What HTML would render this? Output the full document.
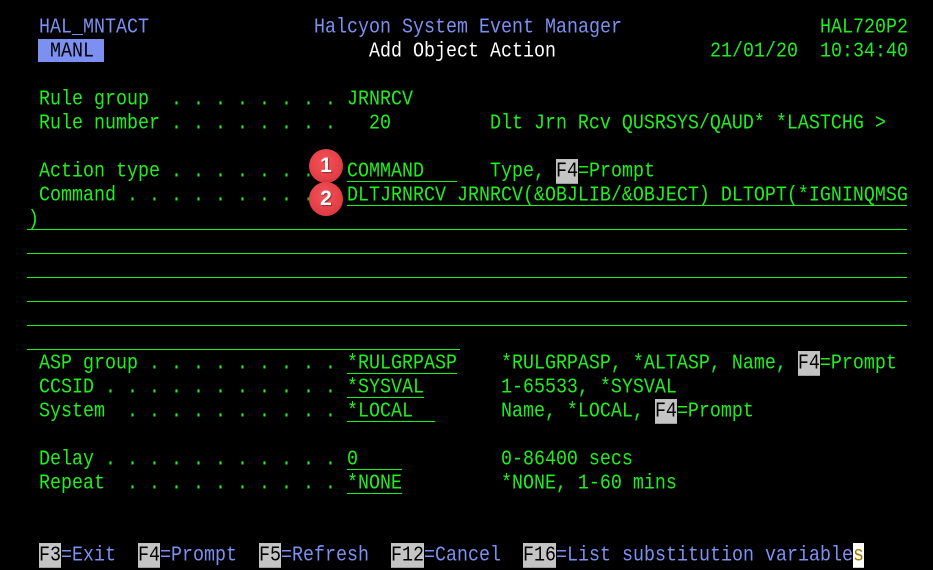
<!DOCTYPE html>
<html><head><meta charset="utf-8"><style>
html,body{margin:0;padding:0;background:#000;}
body{width:933px;height:569px;position:relative;overflow:hidden;font-family:"Liberation Mono",monospace;font-size:18.33px;}
.r{position:absolute;white-space:pre;line-height:24px;height:24px;color:#1ef01e;transform:scaleY(1.18);transform-origin:0 50%;}
.b{color:#7b90f0;}
.w{color:#fff;}
.k{background:#c4c4c4;color:#000;}
.u{position:absolute;height:1px;background:#1ef01e;}
.badge{position:absolute;width:34px;height:34px;border-radius:50%;background:radial-gradient(circle at 45% 40%,#f2555a,#d93036);color:#fff;font-family:"Liberation Sans",sans-serif;font-weight:bold;font-size:21px;line-height:34px;text-align:center;box-shadow:0 2px 4px rgba(0,0,0,.6);text-shadow:1px 1px 1px rgba(0,0,0,.4);}
</style></head><body>
<div class="r b" style="left:39px;top:16px">HAL_MNTACT</div>
<div class="r b" style="left:314px;top:16px">Halcyon System Event Manager</div>
<div class="r" style="left:820px;top:16px">HAL720P2</div>
<div style="position:absolute;left:38px;top:39px;width:66px;height:23px;background:#7b90f0"></div>
<div class="r" style="left:39px;top:40px;color:#000"> MANL</div>
<div class="r w" style="left:369px;top:40px">Add Object Action</div>
<div class="r" style="left:710px;top:40px">21/01/20  10:34:40</div>

<div class="r" style="left:39px;top:88px">Rule group  . . . . . . . . JRNRCV</div>
<div class="r" style="left:39px;top:112px">Rule number . . . . . . . .   20         Dlt Jrn Rcv QUSRSYS/QAUD* *LASTCHG &gt;</div>
<div class="r" style="left:39px;top:160px">Action type . . . . . . . . COMMAND      Type, <span class="k">F4</span>=Prompt</div>
<div class="r" style="left:39px;top:184px">Command . . . . . . . . . . DLTJRNRCV JRNRCV(&amp;OBJLIB/&amp;OBJECT) DLTOPT(*IGNINQMSG</div>
<div class="r" style="left:28px;top:208px">)</div>
<div class="u" style="left:347px;top:181px;width:110px"></div>
<div class="u" style="left:347px;top:205px;width:560px"></div>
<div class="u" style="left:27px;top:229px;width:880px"></div>
<div class="u" style="left:27px;top:253px;width:880px"></div>
<div class="u" style="left:27px;top:277px;width:880px"></div>
<div class="u" style="left:27px;top:301px;width:880px"></div>
<div class="u" style="left:27px;top:325px;width:880px"></div>
<div class="u" style="left:27px;top:349px;width:433px"></div>

<div class="r" style="left:39px;top:352px">ASP group . . . . . . . . . *RULGRPASP    *RULGRPASP, *ALTASP, Name, <span class="k">F4</span>=Prompt</div>
<div class="r" style="left:39px;top:376px">CCSID . . . . . . . . . . . *SYSVAL       1-65533, *SYSVAL</div>
<div class="r" style="left:39px;top:400px">System  . . . . . . . . . . *LOCAL        Name, *LOCAL, <span class="k">F4</span>=Prompt</div>
<div class="u" style="left:347px;top:373px;width:110px"></div>
<div class="u" style="left:347px;top:397px;width:77px"></div>
<div class="u" style="left:347px;top:421px;width:88px"></div>

<div class="r" style="left:39px;top:448px">Delay . . . . . . . . . . . 0             0-86400 secs</div>
<div class="r" style="left:39px;top:472px">Repeat  . . . . . . . . . . *NONE         *NONE, 1-60 mins</div>
<div class="u" style="left:347px;top:469px;width:55px"></div>
<div class="u" style="left:347px;top:493px;width:55px"></div>

<div class="r b" style="left:39px;top:544px"><span class="k">F3</span>=Exit  <span class="k">F4</span>=Prompt  <span class="k">F5</span>=Refresh  <span class="k">F12</span>=Cancel  <span class="k">F16</span>=List substitution variable<span style="background:#fff;color:#a07800">s</span></div>

<div class="badge" style="left:309px;top:149px">1</div>
<div class="badge" style="left:309px;top:182px">2</div>
</body></html>
